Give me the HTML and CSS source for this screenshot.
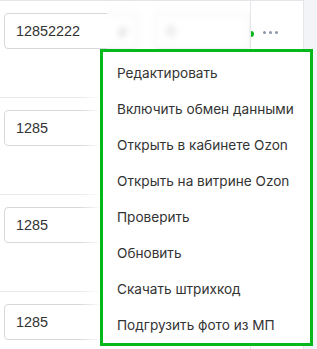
FILE: index.html
```html
<!doctype html>
<html lang="ru">
    <head>
        <meta charset="UTF-8" />
        <meta name="viewport" content="width=device-width, initial-scale=1.0" />
        <title>Товары</title>
        <link rel="stylesheet" href="styles.css">
    </head>
    <body>
        <div class="page">
            <div class="table">
                <div class="row">
                    <div class="cell-id">
                        <div class="field">
                            <input type="text" value="12852222" />
                            <span class="suffix">₽</span>
                        </div>
                    </div>
                    <div class="cell-qty"><input type="text" value="0" /></div>
                    <div class="cell-actions">
                        <span class="marker"></span>
                        <span class="dots"><i></i><i></i><i></i></span>
                    </div>
                </div>
                <div class="row">
                    <div class="cell-id">
                        <div class="field"><input type="text" value="1285" /></div>
                    </div>
                    <div class="cell-qty"><input type="text" value="0" /></div>
                    <div class="cell-actions">
                        <span class="dots"><i></i><i></i><i></i></span>
                    </div>
                </div>
                <div class="row">
                    <div class="cell-id">
                        <div class="field"><input type="text" value="1285" /></div>
                    </div>
                    <div class="cell-qty"><input type="text" value="0" /></div>
                    <div class="cell-actions">
                        <span class="dots"><i></i><i></i><i></i></span>
                    </div>
                </div>
                <div class="row">
                    <div class="cell-id">
                        <div class="field"><input type="text" value="1285" /></div>
                    </div>
                    <div class="cell-qty"><input type="text" value="0" /></div>
                    <div class="cell-actions">
                        <span class="dots"><i></i><i></i><i></i></span>
                    </div>
                </div>
            </div>

            <div class="fade"></div>
            <div class="blur"></div>

            <ul class="menu">
                <li>Редактировать</li>
                <li>Включить обмен данными</li>
                <li>Открыть в кабинете Ozon</li>
                <li>Открыть на витрине Ozon</li>
                <li>Проверить</li>
                <li>Обновить</li>
                <li>Скачать штрихкод</li>
                <li>Подгрузить фото из МП</li>
            </ul>
        </div>
    </body>
</html>
```

FILE: styles.css
```css
body {
    margin: 0;
    padding: 0;
    background: #f3f4f7;
    font-family: "Liberation Sans", Arial, sans-serif;
}
.page {
    position: relative;
    width: 317px;
    height: 349px;
    overflow: hidden;
}
.table {
    width: 303px;
    background: #ffffff;
    border-top: 1px solid #e4e6ea;
    border-right: 1px solid #e4e6ea;
}
.row {
    display: flex;
    align-items: flex-start;
    height: 96px;
    border-bottom: 1px solid #e8e9ec;
    box-sizing: content-box;
}
.cell-id {
    width: 133px;
    padding: 12px 0 0 4px;
}
.field {
    position: relative;
}
.row input {
    display: block;
    height: 36px;
    padding: 0 11px;
    box-sizing: border-box;
    border: 1px solid #d6d8dc;
    border-radius: 4px;
    font-family: "Liberation Sans", Arial, sans-serif;
    font-size: 14.4px;
    color: #333;
    background: #fff;
    outline: none;
}
.cell-id input {
    width: 133px;
}
.suffix {
    position: absolute;
    right: 10px;
    top: 10px;
    font-size: 14px;
    color: #999;
}
.cell-qty {
    width: 95px;
    margin-left: 18px;
    padding-top: 12px;
}
.cell-qty input {
    width: 95px;
    color: #999;
}
.cell-actions {
    position: relative;
    width: 52px;
    height: 96px;
    border-left: 1px solid #e4e6ea;
}
.marker {
    position: absolute;
    left: 0;
    top: 30px;
    width: 3px;
    height: 6px;
    border-radius: 0 3px 3px 0;
    background: #0cb81f;
}
.dots {
    display: flex;
    gap: 3px;
    padding: 30px 0 0 12px;
}
.dots i {
    display: block;
    width: 3px;
    height: 3px;
    border-radius: 50%;
    background: #8d97aa;
}
.fade {
    position: absolute;
    left: 80px;
    top: 49px;
    width: 20px;
    height: 300px;
    background: linear-gradient(to right, rgba(255, 255, 255, 0), rgba(255, 255, 255, 0.9));
}
.blur {
    position: absolute;
    left: 107px;
    top: 1px;
    width: 143px;
    height: 48px;
    background: rgba(255, 255, 255, 0.45);
    backdrop-filter: blur(3px);
}
.menu {
    position: absolute;
    left: 100px;
    top: 49px;
    width: 213px;
    height: 297px;
    margin: 0;
    padding: 3px 0 0;
    list-style: none;
    box-sizing: border-box;
    background: #ffffff;
    border: 3px solid #06b81c;
}
.menu li {
    height: 36px;
    line-height: 36px;
    padding-left: 14px;
    font-family: Inter, "Noto Sans", sans-serif;
    font-size: 13.6px;
    color: #333;
    white-space: nowrap;
}
```
